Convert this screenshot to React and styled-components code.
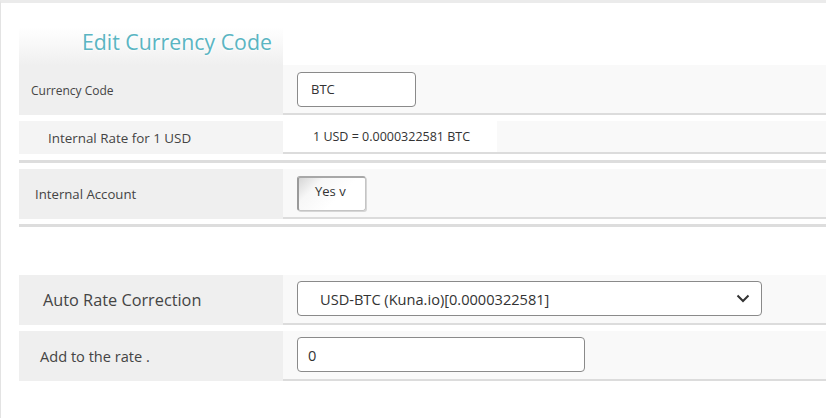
import React from "react"
import styled, { createGlobalStyle } from "styled-components"

const Global = createGlobalStyle`
  body {
    margin: 0;
    background: #fff;
    font-family: "Open Sans", "Noto Sans", sans-serif;
    color: #3d3d3d;
  }
`

const Page = styled.div`
  height: 418px;
  box-sizing: border-box;
  border-top: 3px solid #ebebeb;
  border-left: 1px solid #e3e3e3;
  padding: 24px 0 0 18px;
`

const Title = styled.div`
  width: 264px;
  height: 38px;
  box-sizing: border-box;
  padding: 0 0 0 63px;
  background: linear-gradient(to bottom, #ffffff 0%, #f7f7f7 55%, #efefef 100%);
  font-size: 21.3px;
  color: #5ab5c2;
  text-shadow: 0 0 3px #fff, 0 0 3px #fff;
  white-space: nowrap;
`

const Row = styled.div`
  display: grid;
  grid-template-columns: 264px 1fr;
  height: ${p => p.h}px;
  margin-top: ${p => p.mt || 0}px;
`

const Label = styled.div`
  background: ${p => p.light ? "#f4f4f4" : "#efefef"};
  display: flex;
  align-items: center;
  padding-left: ${p => p.pl}px;
  font-size: ${p => p.fs}px;
  color: #444;
  white-space: nowrap;
`

const Value = styled.div`
  background: #f9f9f9;
  border-bottom: 2px solid #dcdcdc;
  display: flex;
  align-items: ${p => p.top ? "flex-start" : "center"};
  padding: ${p => p.top ? "6px 0 0 14px" : "0 0 0 14px"};
`

const TextBox = styled.div`
  width: ${p => p.w}px;
  height: 35px;
  box-sizing: border-box;
  border: 1px solid #8a8a8a;
  border-radius: 4px;
  background: #fff;
  display: flex;
  align-items: center;
  padding-left: ${p => p.pl}px;
  font-size: ${p => p.fs}px;
  color: #333;
`

const RateBox = styled.div`
  align-self: stretch;
  width: 214px;
  margin-left: -14px;
  background: #fff;
  display: flex;
  align-items: center;
  padding-left: 30px;
  box-sizing: border-box;
  font-size: 12.5px;
  color: #333;
`

const YesButton = styled.div`
  width: 69px;
  height: 35px;
  box-sizing: border-box;
  border: 1px solid #c4c4c4;
  border-left: 2px solid #9a9a9a;
  border-top: 2px solid #a8a8a8;
  border-radius: 3px;
  background: linear-gradient(135deg, #d6d6d6 0%, #f7f7f7 25%, #fff 60%);
  box-shadow: 1px 1px 0 #d6d6d6;
  display: flex;
  align-items: center;
  padding: 0 0 6px 16px;
  font-size: 13px;
  color: #333;
`

const Select = styled.div`
  width: 465px;
  height: 35px;
  box-sizing: border-box;
  border: 1px solid #8a8a8a;
  border-radius: 4px;
  background: #fff;
  display: flex;
  align-items: center;
  justify-content: space-between;
  padding: 0 11px 0 22px;
  font-size: 14.6px;
  color: #333;
`

const Divider = styled.div`
  height: 3px;
  background: #dddddd;
  margin-top: ${p => p.mt}px;
`

const Chevron = () => (
  <svg width="14" height="9" viewBox="0 0 14 9">
    <path d="M1.5 1.5 L7 7 L12.5 1.5" fill="none" stroke="#333" strokeWidth="2" />
  </svg>
)

export default function App() {
  return (
    <>
      <Global />
      <Page>
        <Title>Edit Currency Code</Title>
        <Row h={50}>
          <Label pl={12} fs={12}>Currency Code</Label>
          <Value>
            <TextBox w={119} pl={13} fs={13}>BTC</TextBox>
          </Value>
        </Row>
        <Row h={33} mt={6}>
          <Label light pl={29} fs={13.4}>Internal Rate for 1 USD</Label>
          <Value>
            <RateBox>1 USD = 0.0000322581 BTC</RateBox>
          </Value>
        </Row>
        <Divider mt={6} />
        <Row h={50} mt={6}>
          <Label pl={16} fs={13.2}>Internal Account</Label>
          <Value>
            <YesButton>Yes v</YesButton>
          </Value>
        </Row>
        <Divider mt={5} />
        <Row h={50} mt={48}>
          <Label pl={24} fs={16.3}>Auto Rate Correction</Label>
          <Value top>
            <Select>
              <span>USD-BTC (Kuna.io)[0.0000322581]</span>
              <Chevron />
            </Select>
          </Value>
        </Row>
        <Row h={50} mt={6}>
          <Label pl={21} fs={14.6}>Add to the rate .</Label>
          <Value top>
            <TextBox w={288} pl={10} fs={14.6}>0</TextBox>
          </Value>
        </Row>
      </Page>
    </>
  )
}
